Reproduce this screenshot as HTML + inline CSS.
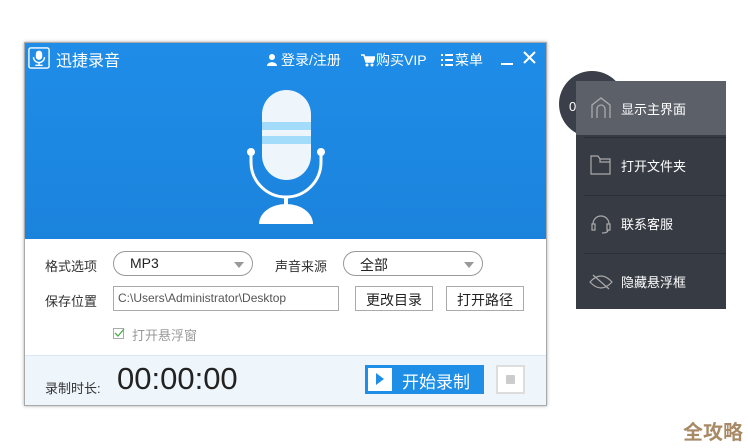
<!DOCTYPE html>
<html><head><meta charset="utf-8"><style>
*{margin:0;padding:0;box-sizing:border-box}
body{width:748px;height:448px;background:#fff;position:relative;overflow:hidden;font-family:"Liberation Sans","Noto Sans CJK SC",sans-serif}
.a{position:absolute}
.win{left:24px;top:42px;width:523px;height:364px;border:1px solid #a9a9a9;box-shadow:0 0 3px rgba(0,0,0,.35);background:#fff}
.hdr{left:0;top:0;width:521px;height:196px;background:linear-gradient(#1f8de8,#1b83dc)}
.w{color:#fff;font-size:14px}
.lbl{font-size:13px;color:#333}
.sel{border:1px solid #999;border-radius:13px;height:25px;font-size:14px;color:#222;padding:3px 0 0 16px}
.tri{position:absolute;right:8px;top:10px;border-left:5px solid transparent;border-right:5px solid transparent;border-top:6px solid #999}
.btn{border:1px solid #aaa;height:25px;font-size:14px;color:#222;text-align:center;padding-top:3px}
.mi{left:0;width:150px;height:57px;color:#fff;font-size:13px}
.mi span{position:absolute;left:45px;top:19px}
.sep{left:8px;width:142px;height:1px;background:#2b2f37}
</style></head><body>
<div class="a win">
 <div class="a hdr">
  <svg class="a" style="left:3px;top:4px" width="22" height="22" viewBox="0 0 24 24"><rect x="1" y="1" width="22" height="22" rx="2" fill="none" stroke="#fff" stroke-width="1.5"/><rect x="8.5" y="4" width="7" height="10" rx="3.5" fill="#fff"/><path d="M6 11a6 6 0 0 0 12 0M12 17v3M8 20h8" fill="none" stroke="#fff" stroke-width="1.5"/></svg>
  <div class="a w" style="left:31px;top:4px;font-size:16px">迅捷录音</div>
  <svg class="a" style="left:242px;top:11px" width="10" height="12" viewBox="0 0 10 12"><circle cx="5" cy="3" r="3" fill="#fff"/><path d="M0 12c0-5 10-5 10 0z" fill="#fff"/></svg>
  <div class="a w" style="left:256px;top:7px">登录/注册</div>
  <svg class="a" style="left:336px;top:11px" width="14" height="13" viewBox="0 0 14 13"><path d="M0 1h3l2 7h7l2-5H4" fill="none" stroke="#fff" stroke-width="1.5"/><rect x="4" y="3" width="9" height="5" fill="#fff"/><circle cx="6" cy="11" r="1.5" fill="#fff"/><circle cx="11" cy="11" r="1.5" fill="#fff"/></svg>
  <div class="a w" style="left:351px;top:7px">购买VIP</div>
  <svg class="a" style="left:416px;top:11px" width="12" height="12"><path d="M0 1h2M4 1h8M0 6h2M4 6h8M0 11h2M4 11h8" stroke="#fff" stroke-width="2"/></svg>
  <div class="a w" style="left:430px;top:7px">菜单</div>
  <div class="a" style="left:476px;top:20px;width:12px;height:2px;background:#fff"></div>
  <svg class="a" style="left:498px;top:8px" width="13" height="13"><path d="M1 1l11 11M12 1L1 12" stroke="#fff" stroke-width="2"/></svg>
  <svg class="a" style="left:216px;top:45px" width="90" height="136" viewBox="0 0 90 136">
   <rect x="21" y="2" width="49" height="90" rx="24.5" fill="#eef6fc"/>
   <rect x="21" y="34" width="49" height="8" fill="#a3dcfa"/><rect x="21" y="48" width="49" height="8" fill="#a3dcfa"/>
   <path d="M10 66v8a35 35 0 0 0 70 0v-8" fill="none" stroke="#fff" stroke-width="3"/>
   <circle cx="10" cy="64" r="4" fill="#fff"/><circle cx="80" cy="64" r="4" fill="#fff"/>
   <rect x="43" y="109" width="4" height="16" fill="#fff"/>
   <path d="M18 136a27 20 0 0 1 54 0z" fill="#fff"/>
  </svg>
 </div>
 <div class="a lbl" style="left:20px;top:213px">格式选项</div>
 <div class="a sel" style="left:88px;top:208px;width:140px">MP3<i class="tri"></i></div>
 <div class="a lbl" style="left:250px;top:213px">声音来源</div>
 <div class="a sel" style="left:318px;top:208px;width:140px">全部<i class="tri"></i></div>
 <div class="a lbl" style="left:20px;top:248px">保存位置</div>
 <div class="a" style="left:88px;top:243px;width:226px;height:25px;border:1px solid #aaa;font-size:12px;color:#555;padding:4px 0 0 4px">C:\Users\Administrator\Desktop</div>
 <div class="a btn" style="left:330px;top:243px;width:78px">更改目录</div>
 <div class="a btn" style="left:421px;top:243px;width:78px">打开路径</div>
 <div class="a" style="left:88px;top:285px;width:11px;height:11px;border:1px solid #aaa"></div>
 <svg class="a" style="left:89px;top:284px" width="11" height="11"><path d="M1 6l3 3 6-7" fill="none" stroke="#4caf50" stroke-width="1.3"/></svg>
 <div class="a" style="left:107px;top:282px;font-size:13px;color:#999">打开悬浮窗</div>
 <div class="a" style="left:0;top:312px;width:521px;height:50px;background:#eef6fc;border-top:1px solid #dbe8f3"></div>
 <div class="a lbl" style="left:20px;top:335px">录制时长:</div>
 <div class="a" style="left:92px;top:318px;font-size:31px;color:#222">00:00:00</div>
 <div class="a" style="left:340px;top:322px;width:119px;height:29px;background:#1e8ee6"></div>
 <div class="a" style="left:343px;top:325px;width:24px;height:23px;background:#fff"></div>
 <div class="a" style="left:351px;top:330px;border-top:6px solid transparent;border-bottom:6px solid transparent;border-left:8px solid #1e8ee6"></div>
 <div class="a" style="left:377px;top:325px;font-size:17px;color:#fff">开始录制</div>
 <div class="a" style="left:471px;top:322px;width:29px;height:29px;border:2px solid #ddd;background:#fff"></div>
 <div class="a" style="left:481px;top:332px;width:9px;height:9px;background:#ccc;border-radius:1px"></div>
</div>
<div class="a" style="left:559px;top:71px;width:66px;height:66px;border-radius:50%;background:#3a3f4a"></div>
<div class="a" style="left:569px;top:99px;color:#fff;font-size:13px">0</div>
<div class="a" style="left:576px;top:81px;width:150px;height:228px;background:#373b44">
 <div class="a mi" style="top:0;height:54px;background:#5c6069"><span style="top:18px">显示主界面</span>
  <svg class="a" style="left:14px;top:15px" width="22" height="24"><path d="M2 22V9l9-7 9 7v13M7 22v-9a4 4 0 0 1 8 0v9" fill="none" stroke="#aaa" stroke-width="1.3"/></svg></div>
 <div class="a sep" style="top:56px"></div>
 <div class="a mi" style="top:57px"><span style="top:18px">打开文件夹</span>
  <svg class="a" style="left:14px;top:17px" width="22" height="20"><path d="M1 1h7l2 3h10v15H1z M10 4v3h10" fill="none" stroke="#aaa" stroke-width="1.2"/></svg></div>
 <div class="a sep" style="top:114px"></div>
 <div class="a mi" style="top:115px"><span style="top:18px">联系客服</span>
  <svg class="a" style="left:14px;top:17px" width="22" height="22"><path d="M3 11a8 8 0 0 1 16 0M2 11h3v6H2zM17 11h3v6h-3zM18 17q0 3-6 3" fill="none" stroke="#aaa" stroke-width="1.2"/></svg></div>
 <div class="a sep" style="top:172px"></div>
 <div class="a mi" style="top:173px"><span style="top:18px">隐藏悬浮框</span>
  <svg class="a" style="left:13px;top:19px" width="24" height="18"><path d="M1 9q11-12 22 0q-11 12-22 0z M4 2l16 14" fill="none" stroke="#aaa" stroke-width="1.2"/></svg></div>
</div>
<div class="a" style="left:683px;top:416px;font-size:20px;font-weight:bold;color:#a88a66">全攻略</div>
</body></html>
